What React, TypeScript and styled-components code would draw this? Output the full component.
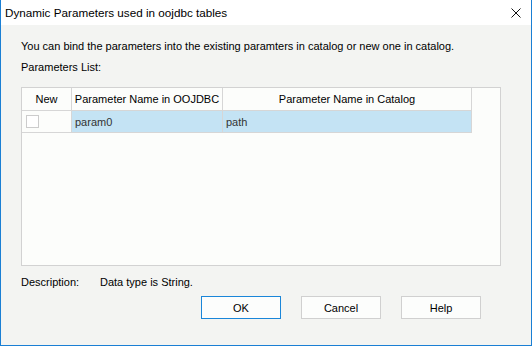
import React from "react";
import styled, { createGlobalStyle } from "styled-components";

const GlobalStyle = createGlobalStyle`
  html, body {
    margin: 0;
    padding: 0;
    background: #ffffff;
  }
  * {
    box-sizing: border-box;
  }
`;

const Window = styled.div`
  width: 532px;
  height: 346px;
  display: flex;
  flex-direction: column;
  border: 1px solid #1a7fd4;
  border-top: none;
  font-family: "Liberation Sans", Arial, sans-serif;
  font-size: 11px;
  color: #000;
  background: #f3f4f2;
`;

const TitleBar = styled.div`
  height: 25px;
  flex: none;
  display: flex;
  align-items: center;
  justify-content: space-between;
  padding: 0 10px 0 4px;
  background: #ffffff;
`;

const Title = styled.span`
  font-size: 11.7px;
  line-height: 16px;
`;

const CloseButton = styled.div`
  width: 10px;
  height: 10px;
  display: flex;
`;

const Body = styled.div`
  flex: 1;
  display: flex;
  flex-direction: column;
  padding: 13px 30px 0 20px;
`;

const TextLine = styled.div<{ $gap?: number }>`
  line-height: 16px;
  height: 16px;
  margin-bottom: ${(p) => p.$gap ?? 0}px;
  white-space: nowrap;
`;

const TableBox = styled.div`
  width: 480px;
  height: 179px;
  border: 1px solid #d2d2d2;
  background: #fcfdfb;
  margin-bottom: 8px;
`;

const Grid = styled.div`
  display: grid;
  grid-template-columns: 50px 151px 249px;
`;

const HeadCell = styled.div`
  height: 23px;
  display: flex;
  align-items: center;
  justify-content: center;
  border-right: 1px solid #d6d6d6;
  border-bottom: 1px solid #d6d6d6;
  white-space: nowrap;
`;

const Cell = styled.div<{ $selected?: boolean }>`
  height: 22px;
  display: flex;
  align-items: center;
  padding-left: 3px;
  border-right: 1px solid #d6d6d6;
  border-bottom: 1px solid #d6d6d6;
  background: ${(p) => (p.$selected ? "#c4e3f4" : "transparent")};
  color: #333;
`;

const CheckCell = styled(Cell)`
  padding-left: 4px;
`;

const CheckBox = styled.div`
  width: 13px;
  height: 13px;
  border: 1px solid #cccccc;
  background: #ffffff;
`;

const DescRow = styled.div`
  display: flex;
  line-height: 16px;
  height: 16px;
  margin-bottom: 6px;
`;

const DescLabel = styled.span`
  width: 79px;
`;

const ButtonRow = styled.div`
  display: flex;
  gap: 20px;
  padding-left: 180px;
`;

const Button = styled.button<{ $primary?: boolean }>`
  width: 80px;
  height: 23px;
  padding: 0;
  font-family: "Liberation Sans", Arial, sans-serif;
  font-size: 11px;
  color: #000;
  background: #fcfdfc;
  border: 1px solid ${(p) => (p.$primary ? "#1a86d9" : "#d0d0d0")};
  border-radius: 0;
`;

export default function App() {
  return (
    <>
      <GlobalStyle />
      <Window>
        <TitleBar>
          <Title>Dynamic Parameters used in oojdbc tables</Title>
          <CloseButton>
            <svg width="10" height="10" viewBox="0 0 10 10">
              <path d="M0.5 0.5 L9.5 9.5 M9.5 0.5 L0.5 9.5" stroke="#111" strokeWidth="1" />
            </svg>
          </CloseButton>
        </TitleBar>
        <Body>
          <TextLine $gap={5}>
            You can bind the parameters into the existing paramters in catalog or new one in catalog.
          </TextLine>
          <TextLine $gap={12}>Parameters List:</TextLine>
          <TableBox>
            <Grid>
              <HeadCell>New</HeadCell>
              <HeadCell>Parameter Name in OOJDBC</HeadCell>
              <HeadCell>Parameter Name in Catalog</HeadCell>
              <CheckCell $selected={false}>
                <CheckBox />
              </CheckCell>
              <Cell $selected>param0</Cell>
              <Cell $selected>path</Cell>
            </Grid>
          </TableBox>
          <DescRow>
            <DescLabel>Description:</DescLabel>
            <span>Data type is String.</span>
          </DescRow>
          <ButtonRow>
            <Button $primary>OK</Button>
            <Button>Cancel</Button>
            <Button>Help</Button>
          </ButtonRow>
        </Body>
      </Window>
    </>
  );
}
